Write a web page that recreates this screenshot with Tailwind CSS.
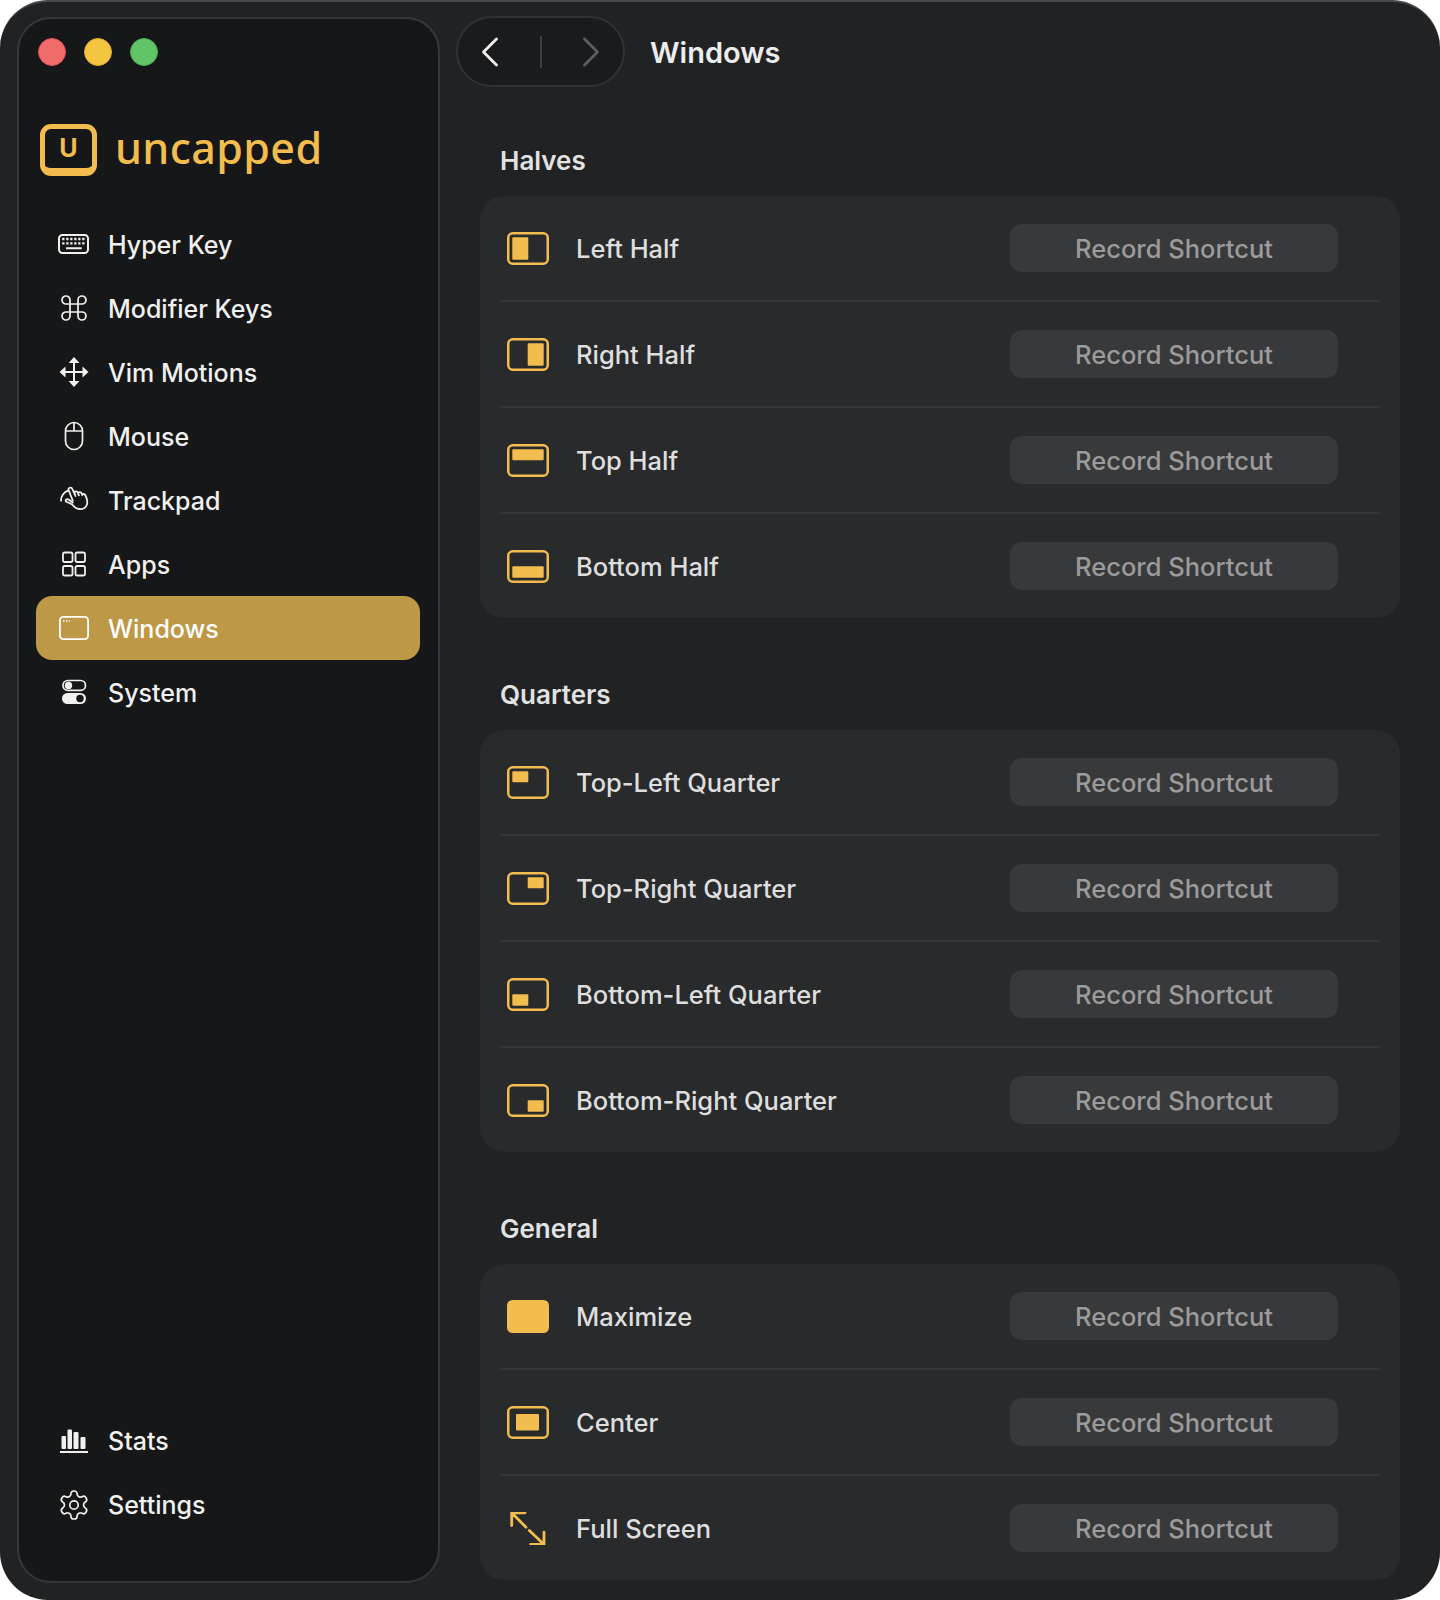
<!DOCTYPE html>
<html>

<head>
  <title>Uncapped - Windows</title>
  <script src="https://cdn.jsdelivr.net/npm/@tailwindcss/browser@4"></script>
</head>

<body class="bg-white font-[Inter,sans-serif]">
  <div class="w-[1440px] h-[1600px] rounded-[48px] overflow-hidden bg-[#212224] border-t-2 border-[#46484b] flex">

    <!-- sidebar -->
    <aside class="ml-[17px] mt-[15px] mb-[17px] w-[423px] rounded-[34px] border-2 border-[#36383a] bg-[#161718] flex flex-col pl-[17px] pr-[18px] text-[#f0f0f0]">
      <div class="mt-[19px] ml-[2px] flex gap-[18px]">
        <div class="w-[28px] h-[28px] rounded-full bg-[#f26b6b] border border-[#d9534f]"></div>
        <div class="w-[28px] h-[28px] rounded-full bg-[#f4c63f] border border-[#e0ae2c]"></div>
        <div class="w-[28px] h-[28px] rounded-full bg-[#61c568] border border-[#4bab50]"></div>
      </div>

      <div class="mt-[58px] ml-[4px] flex items-start gap-[18px] text-[#f2bd4e]">
        <div class="w-[57px] h-[52px] rounded-[11px] border-[5px] border-b-[8px] border-[#f2bd4e] flex items-center justify-center text-[25px] leading-none font-bold">U</div>
        <div class="text-[43px] leading-[48px] font-medium font-['Noto_Sans',sans-serif] tracking-[0.4px]">uncapped</div>
      </div>

      <nav class="mt-[36px] flex flex-col text-[25px] font-[450]">
        <a class="h-[64px] flex items-center gap-[14px] pl-[18px]">
          <svg class="w-[40px] h-[28px]" viewBox="0 0 40 28" fill="none" stroke="currentColor" stroke-width="2">
            <rect x="5" y="5" width="29" height="18" rx="3.500" />
            <path stroke-width="2.300" stroke-dasharray="2.300 1.700" d="M8.200 9h22.300M8.200 13.300h22.300" />
            <path stroke-width="2" d="M12 18.300h15.700" />
          </svg>
          <span class="pt-[4px]">Hyper Key</span>
        </a>
        <a class="h-[64px] flex items-center gap-[14px] pl-[18px]">
          <svg class="w-[40px] h-[28px]" viewBox="-3 1.500 30 21" fill="none" stroke="currentColor" stroke-width="1.300" stroke-linecap="round" stroke-linejoin="round">
            <path d="M15 6v12a3 3 0 1 0 3-3H6a3 3 0 1 0 3 3V6a3 3 0 1 0-3 3h12a3 3 0 1 0-3-3" />
          </svg>
          <span class="pt-[4px]">Modifier Keys</span>
        </a>
        <a class="h-[64px] flex items-center gap-[14px] pl-[18px]">
          <svg class="w-[40px] h-[32px]" viewBox="0 0 40 32" fill="currentColor" stroke="none">
            <rect x="19" y="4" width="2" height="24" />
            <rect x="8" y="15" width="24" height="2" />
            <path d="M20 1l5.500 6h-11zM20 31l5.500-6h-11zM5.500 16l6-5.500v11zM34.500 16l-6-5.500v11z" />
          </svg>
          <span class="pt-[4px]">Vim Motions</span>
        </a>
        <a class="h-[64px] flex items-center gap-[14px] pl-[18px]">
          <svg class="w-[40px] h-[30px]" viewBox="0 0 40 30" fill="none" stroke="currentColor" stroke-width="1.700">
            <rect x="11.500" y="1.500" width="17" height="27" rx="8.500" />
            <path d="M20 1.500v8M11.500 10h17" />
          </svg>
          <span class="pt-[4px]">Mouse</span>
        </a>
        <a class="h-[64px] flex items-center gap-[14px] pl-[18px]">
          <svg class="w-[40px] h-[32px]" viewBox="0 0 40 32" fill="none" stroke="currentColor" stroke-width="1.800" stroke-linecap="round" stroke-linejoin="round">
            <path d="M7 16.700a10 10 0 0 1 7.300-10" />
            <path d="M18.700 16.500L14.600 6c-.8-2.200 2.800-3.400 3.700-1.200L21.500 12l-1-3c-.5-1.600 2.500-2.300 3.200-.5l1.200 2.800-.6-1.700c-.4-1.500 2.500-2.200 3.200-.4l.8 2c-.3-1.300 2.200-1.800 3-.2 1.500 3 2.500 6 1.800 9-.8 3.500-4 5.500-8 5-3-.3-5-2-6.800-4.500L12 17.500c-1-1.500 1-3 2.500-2l4.200 3" />
          </svg>
          <span class="pt-[4px]">Trackpad</span>
        </a>
        <a class="h-[64px] flex items-center gap-[14px] pl-[18px]">
          <svg class="w-[40px] h-[26px]" viewBox="0 0 40 26" fill="none" stroke="currentColor" stroke-width="1.800">
            <rect x="9" y="1.500" width="9.500" height="9.500" rx="1.800" />
            <rect x="21.500" y="1.500" width="9.500" height="9.500" rx="1.800" />
            <rect x="9" y="15" width="9.500" height="9.500" rx="1.800" />
            <rect x="21.500" y="15" width="9.500" height="9.500" rx="1.800" />
          </svg>
          <span class="pt-[4px]">Apps</span>
        </a>
        <a class="h-[64px] flex items-center gap-[14px] pl-[18px] rounded-[16px] bg-[#bd9847] text-white">
          <svg class="w-[40px] h-[26px]" viewBox="0 0 40 26" fill="none" stroke="currentColor" stroke-width="1.800">
            <rect x="5.900" y="1.900" width="28.200" height="22.200" rx="3.500" />
            <path stroke-width="1.600" stroke-dasharray="1.600 1.400" d="M9 6h7" />
          </svg>
          <span class="pt-[4px]">Windows</span>
        </a>
        <a class="h-[64px] flex items-center gap-[14px] pl-[18px]">
          <svg class="w-[40px] h-[26px]" viewBox="0 0 40 26" fill="none">
            <rect x="9" y="1.500" width="22.500" height="9.800" rx="4.900" stroke="currentColor" stroke-width="1.700" />
            <circle cx="14.500" cy="6.400" r="3.700" fill="currentColor" />
            <rect x="8" y="14" width="24" height="11" rx="5.500" fill="currentColor" />
            <circle cx="26" cy="19.500" r="3.700" fill="#161718" />
          </svg>
          <span class="pt-[4px]">System</span>
        </a>
      </nav>

      <nav class="mt-auto mb-[44px] flex flex-col text-[25px] font-[450]">
        <a class="h-[64px] flex items-center gap-[14px] pl-[18px]">
          <svg class="w-[40px] h-[26px]" viewBox="0 0 40 26" fill="currentColor">
            <rect x="7.500" y="8" width="4.500" height="13" rx="1" />
            <rect x="13.500" y="1.500" width="4.500" height="19.500" rx="1" />
            <rect x="19.500" y="4" width="5" height="17" rx="1" />
            <rect x="26.500" y="9" width="5" height="12" rx="1" />
            <rect x="6" y="23" width="28" height="2" />
          </svg>
          <span class="pt-[2px]">Stats</span>
        </a>
        <a class="h-[64px] flex items-center gap-[14px] pl-[18px]">
          <svg class="w-[40px] h-[30px]" viewBox="-2.290 1.290 28.570 21.430" fill="none" stroke="currentColor" stroke-width="1.200" stroke-linecap="round" stroke-linejoin="round">
            <path d="M12.220 2h-.44a2 2 0 0 0-2 2v.18a2 2 0 0 1-1 1.730l-.43.250a2 2 0 0 1-2 0l-.150-.080a2 2 0 0 0-2.730.730l-.220.380a2 2 0 0 0 .730 2.730l.150.100a2 2 0 0 1 1 1.720v.510a2 2 0 0 1-1 1.740l-.150.090a2 2 0 0 0-.730 2.730l.220.380a2 2 0 0 0 2.730.730l.150-.080a2 2 0 0 1 2 0l.430.250a2 2 0 0 1 1 1.730V20a2 2 0 0 0 2 2h.440a2 2 0 0 0 2-2v-.180a2 2 0 0 1 1-1.730l.430-.250a2 2 0 0 1 2 0l.150.080a2 2 0 0 0 2.730-.730l.220-.390a2 2 0 0 0-.730-2.730l-.150-.080a2 2 0 0 1-1-1.740v-.500a2 2 0 0 1 1-1.740l.150-.090a2 2 0 0 0 .730-2.730l-.220-.380a2 2 0 0 0-2.730-.730l-.150.080a2 2 0 0 1-2 0l-.430-.250a2 2 0 0 1-1-1.730V4a2 2 0 0 0-2-2z" />
            <circle cx="12" cy="12" r="3" />
          </svg>
          <span class="pt-[2px]">Settings</span>
        </a>
      </nav>
    </aside>

    <!-- main column -->
    <main class="ml-[16px] flex-1 pt-[14px]">
      <header class="flex items-center gap-[25px]">
        <div class="w-[169px] h-[71px] rounded-full border-2 border-[#313234] bg-[#1a1b1d] flex items-center justify-between px-[23px]">
          <svg class="w-[18px] h-[30px]" viewBox="0 0 18 30" fill="none" stroke="#f0f0f0" stroke-width="2.800" stroke-linecap="round" stroke-linejoin="round">
            <path d="M15.500 2L2.500 15l13 13" />
          </svg>
          <div class="w-[2px] h-[32px] bg-[#3e3f41]"></div>
          <svg class="w-[18px] h-[30px]" viewBox="0 0 18 30" fill="none" stroke="#5c5d5f" stroke-width="2.800" stroke-linecap="round" stroke-linejoin="round">
            <path d="M2.500 2l13 13-13 13" />
          </svg>
        </div>
        <h1 class="pt-[2px] text-[29px] font-semibold text-[#ececec]">Windows</h1>
      </header>

      <h2 class="mt-[57px] ml-[44px] h-[34px] leading-[34px] text-[26px] font-semibold text-[#e2e2e2]">Halves</h2>
      <section class="mt-[18px] ml-[24px] w-[920px] rounded-[24px] bg-[#292a2c] px-[20px] text-[25.500px] font-[450] text-[#dedede]">
        <div class="h-[104px] flex items-center pl-[7px]">
          <svg class="w-[42px] h-[33px]" viewBox="0 0 42 33" fill="#f2bd4e"><rect x="1.250" y="1.250" width="39.500" height="30.500" rx="4.500" fill="none" stroke="#f2bd4e" stroke-width="2.500" /><rect x="5.300" y="5.300" width="16" height="22.400" rx="1" /></svg>
          <span class="ml-[27px] pt-[2px]">Left Half</span>
          <button class="ml-auto mr-[42px] w-[328px] h-[48px] pt-[2px] rounded-[12px] bg-[#38393b] text-[#9b9b9b]">Record Shortcut</button>
        </div>
        <div class="h-[2px] bg-[#343538]"></div>
        <div class="h-[104px] flex items-center pl-[7px]">
          <svg class="w-[42px] h-[33px]" viewBox="0 0 42 33" fill="#f2bd4e"><rect x="1.250" y="1.250" width="39.500" height="30.500" rx="4.500" fill="none" stroke="#f2bd4e" stroke-width="2.500" /><rect x="20.700" y="5.300" width="16" height="22.400" rx="1" /></svg>
          <span class="ml-[27px] pt-[2px]">Right Half</span>
          <button class="ml-auto mr-[42px] w-[328px] h-[48px] pt-[2px] rounded-[12px] bg-[#38393b] text-[#9b9b9b]">Record Shortcut</button>
        </div>
        <div class="h-[2px] bg-[#343538]"></div>
        <div class="h-[104px] flex items-center pl-[7px]">
          <svg class="w-[42px] h-[33px]" viewBox="0 0 42 33" fill="#f2bd4e"><rect x="1.250" y="1.250" width="39.500" height="30.500" rx="4.500" fill="none" stroke="#f2bd4e" stroke-width="2.500" /><rect x="5.300" y="5.300" width="31.400" height="11" rx="1" /></svg>
          <span class="ml-[27px] pt-[2px]">Top Half</span>
          <button class="ml-auto mr-[42px] w-[328px] h-[48px] pt-[2px] rounded-[12px] bg-[#38393b] text-[#9b9b9b]">Record Shortcut</button>
        </div>
        <div class="h-[2px] bg-[#343538]"></div>
        <div class="h-[104px] flex items-center pl-[7px]">
          <svg class="w-[42px] h-[33px]" viewBox="0 0 42 33" fill="#f2bd4e"><rect x="1.250" y="1.250" width="39.500" height="30.500" rx="4.500" fill="none" stroke="#f2bd4e" stroke-width="2.500" /><rect x="5.300" y="16.300" width="31.400" height="11.400" rx="1" /></svg>
          <span class="ml-[27px] pt-[2px]">Bottom Half</span>
          <button class="ml-auto mr-[42px] w-[328px] h-[48px] pt-[2px] rounded-[12px] bg-[#38393b] text-[#9b9b9b]">Record Shortcut</button>
        </div>
      </section>

      <h2 class="mt-[60px] ml-[44px] h-[34px] leading-[34px] text-[26px] font-semibold text-[#e2e2e2]">Quarters</h2>
      <section class="mt-[18px] ml-[24px] w-[920px] rounded-[24px] bg-[#292a2c] px-[20px] text-[25.500px] font-[450] text-[#dedede]">
        <div class="h-[104px] flex items-center pl-[7px]">
          <svg class="w-[42px] h-[33px]" viewBox="0 0 42 33" fill="#f2bd4e"><rect x="1.250" y="1.250" width="39.500" height="30.500" rx="4.500" fill="none" stroke="#f2bd4e" stroke-width="2.500" /><rect x="5.300" y="5.300" width="16" height="11" rx="1" /></svg>
          <span class="ml-[27px] pt-[2px]">Top-Left Quarter</span>
          <button class="ml-auto mr-[42px] w-[328px] h-[48px] pt-[2px] rounded-[12px] bg-[#38393b] text-[#9b9b9b]">Record Shortcut</button>
        </div>
        <div class="h-[2px] bg-[#343538]"></div>
        <div class="h-[104px] flex items-center pl-[7px]">
          <svg class="w-[42px] h-[33px]" viewBox="0 0 42 33" fill="#f2bd4e"><rect x="1.250" y="1.250" width="39.500" height="30.500" rx="4.500" fill="none" stroke="#f2bd4e" stroke-width="2.500" /><rect x="20.700" y="5.300" width="16" height="11" rx="1" /></svg>
          <span class="ml-[27px] pt-[2px]">Top-Right Quarter</span>
          <button class="ml-auto mr-[42px] w-[328px] h-[48px] pt-[2px] rounded-[12px] bg-[#38393b] text-[#9b9b9b]">Record Shortcut</button>
        </div>
        <div class="h-[2px] bg-[#343538]"></div>
        <div class="h-[104px] flex items-center pl-[7px]">
          <svg class="w-[42px] h-[33px]" viewBox="0 0 42 33" fill="#f2bd4e"><rect x="1.250" y="1.250" width="39.500" height="30.500" rx="4.500" fill="none" stroke="#f2bd4e" stroke-width="2.500" /><rect x="5.300" y="16.300" width="16" height="11.400" rx="1" /></svg>
          <span class="ml-[27px] pt-[2px]">Bottom-Left Quarter</span>
          <button class="ml-auto mr-[42px] w-[328px] h-[48px] pt-[2px] rounded-[12px] bg-[#38393b] text-[#9b9b9b]">Record Shortcut</button>
        </div>
        <div class="h-[2px] bg-[#343538]"></div>
        <div class="h-[104px] flex items-center pl-[7px]">
          <svg class="w-[42px] h-[33px]" viewBox="0 0 42 33" fill="#f2bd4e"><rect x="1.250" y="1.250" width="39.500" height="30.500" rx="4.500" fill="none" stroke="#f2bd4e" stroke-width="2.500" /><rect x="20.700" y="16.300" width="16" height="11.400" rx="1" /></svg>
          <span class="ml-[27px] pt-[2px]">Bottom-Right Quarter</span>
          <button class="ml-auto mr-[42px] w-[328px] h-[48px] pt-[2px] rounded-[12px] bg-[#38393b] text-[#9b9b9b]">Record Shortcut</button>
        </div>
      </section>

      <h2 class="mt-[60px] ml-[44px] h-[34px] leading-[34px] text-[26px] font-semibold text-[#e2e2e2]">General</h2>
      <section class="mt-[18px] ml-[24px] w-[920px] rounded-[24px] bg-[#292a2c] px-[20px] text-[25.500px] font-[450] text-[#dedede]">
        <div class="h-[104px] flex items-center pl-[7px]">
          <svg class="w-[42px] h-[33px]" viewBox="0 0 42 33" fill="#f2bd4e"><rect width="42" height="33" rx="5.500" /></svg>
          <span class="ml-[27px] pt-[2px]">Maximize</span>
          <button class="ml-auto mr-[42px] w-[328px] h-[48px] pt-[2px] rounded-[12px] bg-[#38393b] text-[#9b9b9b]">Record Shortcut</button>
        </div>
        <div class="h-[2px] bg-[#343538]"></div>
        <div class="h-[104px] flex items-center pl-[7px]">
          <svg class="w-[42px] h-[33px]" viewBox="0 0 42 33" fill="#f2bd4e"><rect x="1.250" y="1.250" width="39.500" height="30.500" rx="4.500" fill="none" stroke="#f2bd4e" stroke-width="2.500" /><rect x="9" y="8" width="23" height="16.500" rx="1" /></svg>
          <span class="ml-[27px] pt-[2px]">Center</span>
          <button class="ml-auto mr-[42px] w-[328px] h-[48px] pt-[2px] rounded-[12px] bg-[#38393b] text-[#9b9b9b]">Record Shortcut</button>
        </div>
        <div class="h-[2px] bg-[#343538]"></div>
        <div class="h-[104px] flex items-center pl-[7px]">
          <svg class="w-[42px] h-[33px]" viewBox="0 0 42 33" fill="none" stroke="#f2bd4e" stroke-width="2.800" stroke-linecap="round" stroke-linejoin="round">
            <path d="M4.700 13.500V.8H18M4.700.8L19 15.200M37 20.200v12.300H23.700M37 32.500L22.300 18.500" />
          </svg>
          <span class="ml-[27px] pt-[2px]">Full Screen</span>
          <button class="ml-auto mr-[42px] w-[328px] h-[48px] pt-[2px] rounded-[12px] bg-[#38393b] text-[#9b9b9b]">Record Shortcut</button>
        </div>
      </section>
    </main>
  </div>
</body>

</html>
